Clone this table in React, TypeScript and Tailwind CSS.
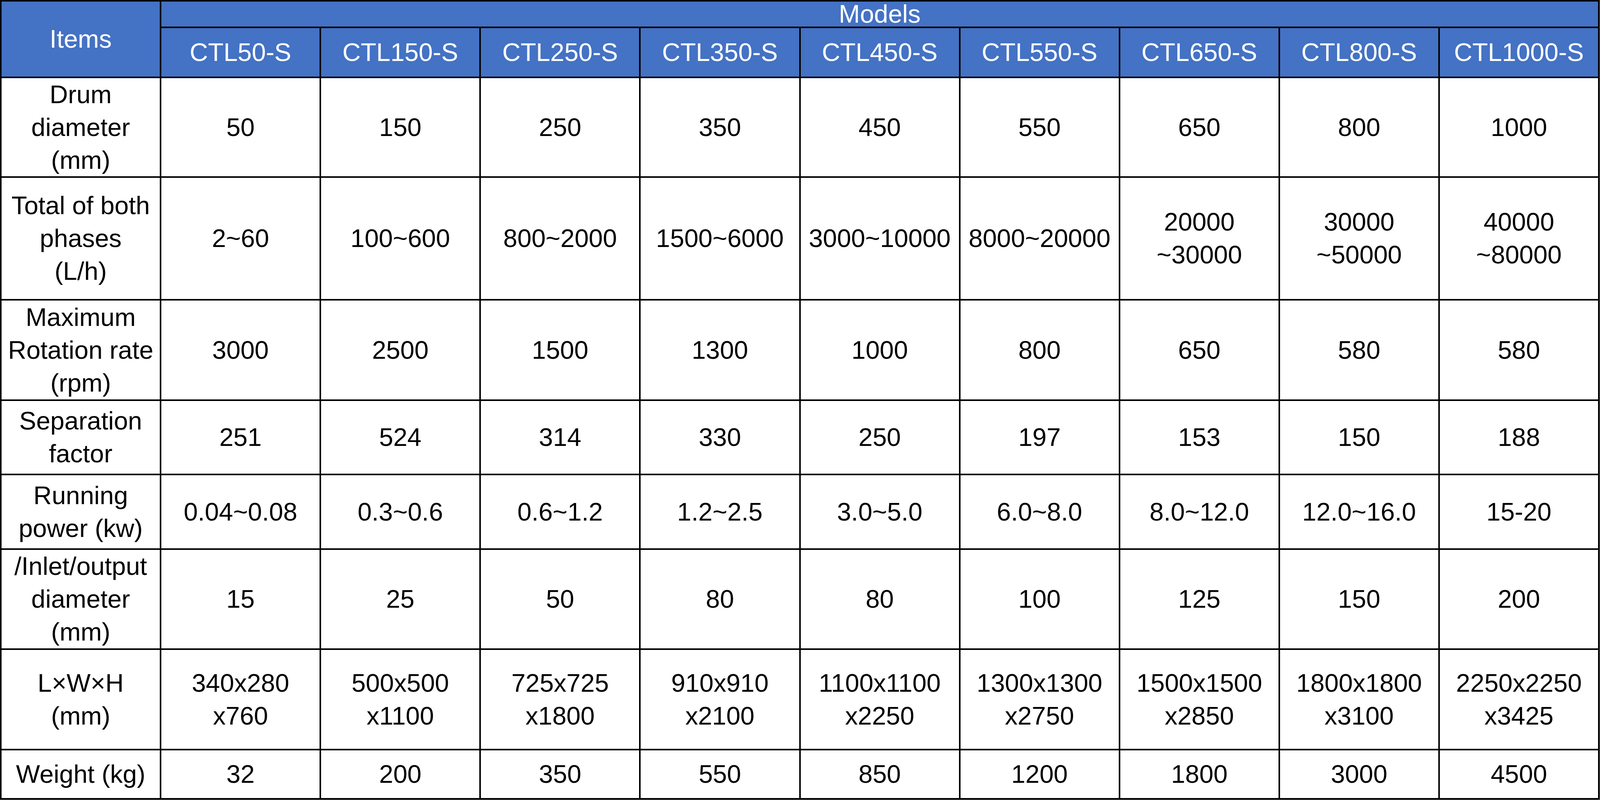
const models = [
  "CTL50-S",
  "CTL150-S",
  "CTL250-S",
  "CTL350-S",
  "CTL450-S",
  "CTL550-S",
  "CTL650-S",
  "CTL800-S",
  "CTL1000-S",
];

// each cell is a list of lines
const rows: { label: string[]; values: string[][] }[] = [
  {
    label: ["Drum", "diameter", "(mm)"],
    values: [["50"], ["150"], ["250"], ["350"], ["450"], ["550"], ["650"], ["800"], ["1000"]],
  },
  {
    label: ["Total of both", "phases", "(L/h)"],
    values: [
      ["2~60"],
      ["100~600"],
      ["800~2000"],
      ["1500~6000"],
      ["3000~10000"],
      ["8000~20000"],
      ["20000", "~30000"],
      ["30000", "~50000"],
      ["40000", "~80000"],
    ],
  },
  {
    label: ["Maximum", "Rotation rate", "(rpm)"],
    values: [["3000"], ["2500"], ["1500"], ["1300"], ["1000"], ["800"], ["650"], ["580"], ["580"]],
  },
  {
    label: ["Separation", "factor"],
    values: [["251"], ["524"], ["314"], ["330"], ["250"], ["197"], ["153"], ["150"], ["188"]],
  },
  {
    label: ["Running", "power (kw)"],
    values: [
      ["0.04~0.08"],
      ["0.3~0.6"],
      ["0.6~1.2"],
      ["1.2~2.5"],
      ["3.0~5.0"],
      ["6.0~8.0"],
      ["8.0~12.0"],
      ["12.0~16.0"],
      ["15-20"],
    ],
  },
  {
    label: ["/Inlet/output", "diameter", "(mm)"],
    values: [["15"], ["25"], ["50"], ["80"], ["80"], ["100"], ["125"], ["150"], ["200"]],
  },
  {
    label: ["L×W×H", "(mm)"],
    values: [
      ["340x280", "x760"],
      ["500x500", "x1100"],
      ["725x725", "x1800"],
      ["910x910", "x2100"],
      ["1100x1100", "x2250"],
      ["1300x1300", "x2750"],
      ["1500x1500", "x2850"],
      ["1800x1800", "x3100"],
      ["2250x2250", "x3425"],
    ],
  },
  {
    label: ["Weight (kg)"],
    values: [["32"], ["200"], ["350"], ["550"], ["850"], ["1200"], ["1800"], ["3000"], ["4500"]],
  },
];

function Cell({ lines }: { lines: string[] }) {
  return (
    <div className="flex flex-col items-center justify-center bg-white text-center whitespace-nowrap text-black">
      {lines.map((line, i) => (
        <span key={i}>{line}</span>
      ))}
    </div>
  );
}

export default function App() {
  return (
    <div className="w-full bg-[#8a8a8a] pr-px pb-px font-['Liberation_Sans',Arial,sans-serif] text-[65px] leading-[84px]">
      <div className="grid grid-cols-10 grid-rows-[64px_124px_251px_310px_253px_186px_187px_252px_253px_122px] gap-[4px] bg-black p-[4px]">
        <div className="row-span-2 flex items-center justify-center bg-[#4472c4] text-white">Items</div>
        <div className="col-span-9 flex items-center justify-center bg-[#4472c4] text-white">Models</div>
        {models.map((m) => (
          <div key={m} className="flex items-center justify-center bg-[#4472c4] text-white">
            {m}
          </div>
        ))}

        {rows.map((row) => (
          <div key={row.label.join(" ")} className="contents">
            <Cell lines={row.label} />
            {row.values.map((v, i) => (
              <Cell key={i} lines={v} />
            ))}
          </div>
        ))}
      </div>
    </div>
  );
}
